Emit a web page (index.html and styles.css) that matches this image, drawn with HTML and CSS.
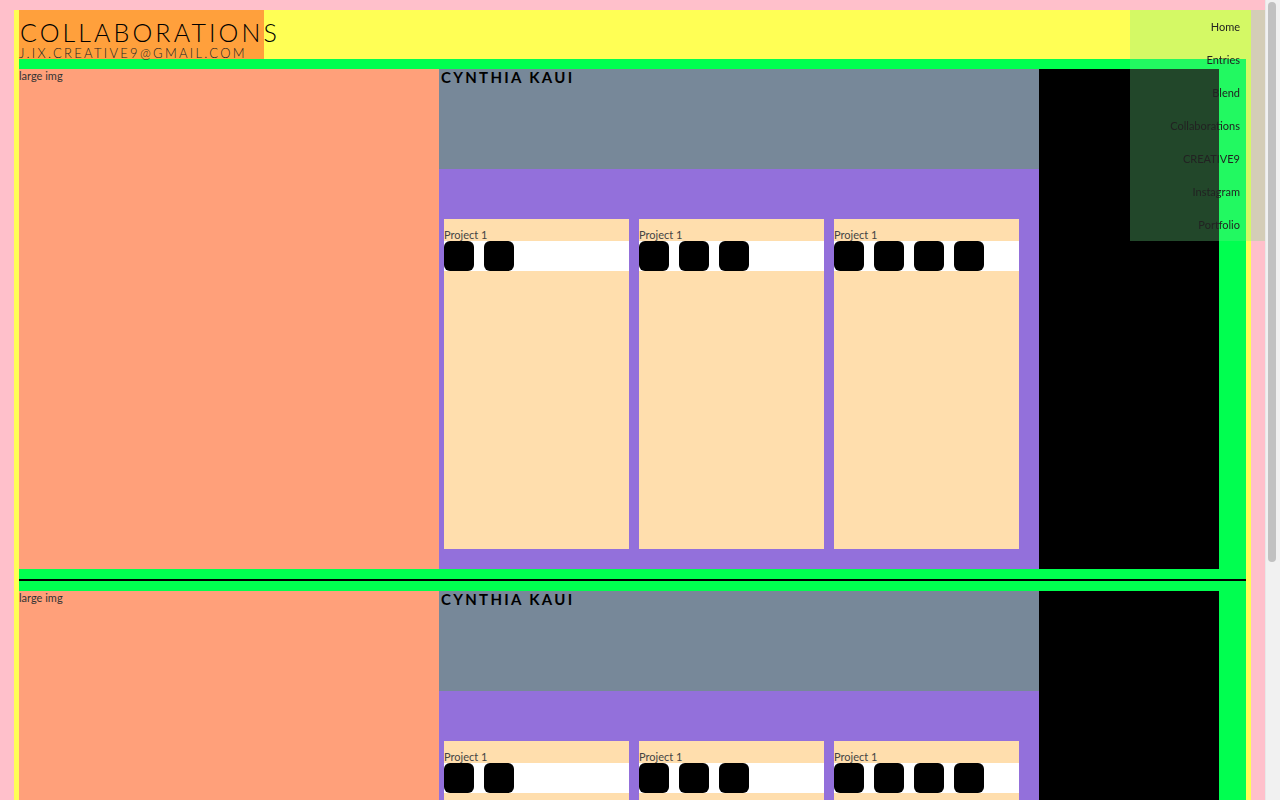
FILE: index.html
```html
<!DOCTYPE html>
<html lang="en">
<head>
<meta charset="utf-8">
<title>Collaborations</title>
<link rel="stylesheet" href="styles.css">
</head>
<body>
<div class="page">
  <header class="masthead">
    <div class="brand">
      <div class="title">COLLABORATIONS</div>
      <div class="email">J.IX.CREATIVE9@GMAIL.COM</div>
    </div>
  </header>

  <section class="collab">
    <div class="row">
      <div class="large">large img</div>
      <div class="mid">
        <div class="name">CYNTHIA KAUI</div>
        <div class="projects">
          <div class="card">
            <div class="label">Project 1</div>
            <div class="icons"><span class="ico"></span><span class="ico"></span></div>
          </div>
          <div class="card">
            <div class="label">Project 1</div>
            <div class="icons"><span class="ico"></span><span class="ico"></span><span class="ico"></span></div>
          </div>
          <div class="card">
            <div class="label">Project 1</div>
            <div class="icons"><span class="ico"></span><span class="ico"></span><span class="ico"></span><span class="ico"></span></div>
          </div>
        </div>
      </div>
      <div class="side"></div>
    </div>
  </section>

  <section class="collab">
    <div class="row">
      <div class="large">large img</div>
      <div class="mid">
        <div class="name">CYNTHIA KAUI</div>
        <div class="projects">
          <div class="card">
            <div class="label">Project 1</div>
            <div class="icons"><span class="ico"></span><span class="ico"></span></div>
          </div>
          <div class="card">
            <div class="label">Project 1</div>
            <div class="icons"><span class="ico"></span><span class="ico"></span><span class="ico"></span></div>
          </div>
          <div class="card">
            <div class="label">Project 1</div>
            <div class="icons"><span class="ico"></span><span class="ico"></span><span class="ico"></span><span class="ico"></span></div>
          </div>
        </div>
      </div>
      <div class="side"></div>
    </div>
  </section>
</div>

<nav class="menu">
  <a href="#">Home</a>
  <a href="#">Entries</a>
  <a href="#">Blend</a>
  <a href="#">Collaborations</a>
  <a href="#">CREATIVE9</a>
  <a href="#">Instagram</a>
  <a href="#">Portfolio</a>
</nav>

<div class="scrollbar"><div class="thumb"></div></div>
</body>
</html>
```

FILE: styles.css
```css
html { background: #ffc0cb; }
body {
  margin: 10px 29px 40px 14px;
  background: #ffc0cb;
  font-family: Lato, "Open Sans", sans-serif;
  color: #333;
}
.page {
  background: #ffff55;
  padding: 0 5px;
}
.masthead {
  height: 49px;
  display: flex;
}
.brand {
  width: 245px;
  height: 49px;
  box-sizing: border-box;
  padding-top: 11px;
  background: #ffa03c;
  white-space: nowrap;
}
.title {
  font-size: 25px;
  line-height: 23px;
  font-weight: 300;
  letter-spacing: 3.1px;
  color: #000;
  padding-left: 1px;
}
.email {
  margin-top: 3px;
  font-size: 13px;
  line-height: 12px;
  font-weight: 300;
  letter-spacing: 2.3px;
  color: #222;
}
.collab {
  background: #00ff50;
  padding: 10px 0;
  border-bottom: 2px solid #000;
}
.row {
  width: 1200px;
  height: 500px;
  display: flex;
}
.large {
  width: 420px;
  background: #ffa07a;
  font-size: 11px;
  line-height: 13px;
  color: #333;
}
.mid {
  width: 600px;
  display: flex;
  flex-direction: column;
}
.name {
  height: 100px;
  background: #778899;
  font-size: 15px;
  font-weight: 700;
  letter-spacing: 2.3px;
  line-height: 17px;
  padding-left: 2px;
  color: #000;
}
.projects {
  flex: 1;
  background: #9370db;
  display: flex;
  gap: 10px;
  padding: 50px 0 0 5px;
}
.card {
  width: 185px;
  height: 330px;
  background: #ffdead;
  box-sizing: border-box;
  padding-top: 10px;
}
.label {
  font-size: 11px;
  line-height: 12px;
  color: #444;
}
.icons {
  height: 30px;
  background: #fff;
  display: flex;
  gap: 10px;
}
.ico {
  width: 30px;
  height: 30px;
  background: #000;
  border-radius: 6px;
}
.side {
  width: 180px;
  background: #000;
}
.menu {
  position: fixed;
  top: 10px;
  right: 15px;
  width: 135px;
  box-sizing: border-box;
  padding-right: 25px;
  background: rgba(112, 235, 138, 0.3);
  display: flex;
  flex-direction: column;
  align-items: flex-end;
}
.menu a {
  display: block;
  height: 33px;
  line-height: 33px;
  font-size: 11px;
  color: #222;
  text-decoration: none;
}
.scrollbar {
  position: fixed;
  top: 0;
  right: 0;
  width: 15px;
  height: 100%;
  background: #f1f1f1;
  border-left: 1px solid #e8e8e8;
  box-sizing: border-box;
}
.thumb {
  margin: 2px 0 0 2px;
  width: 8px;
  height: 560px;
  border-radius: 4px;
  background: #c1c1c1;
}
```
